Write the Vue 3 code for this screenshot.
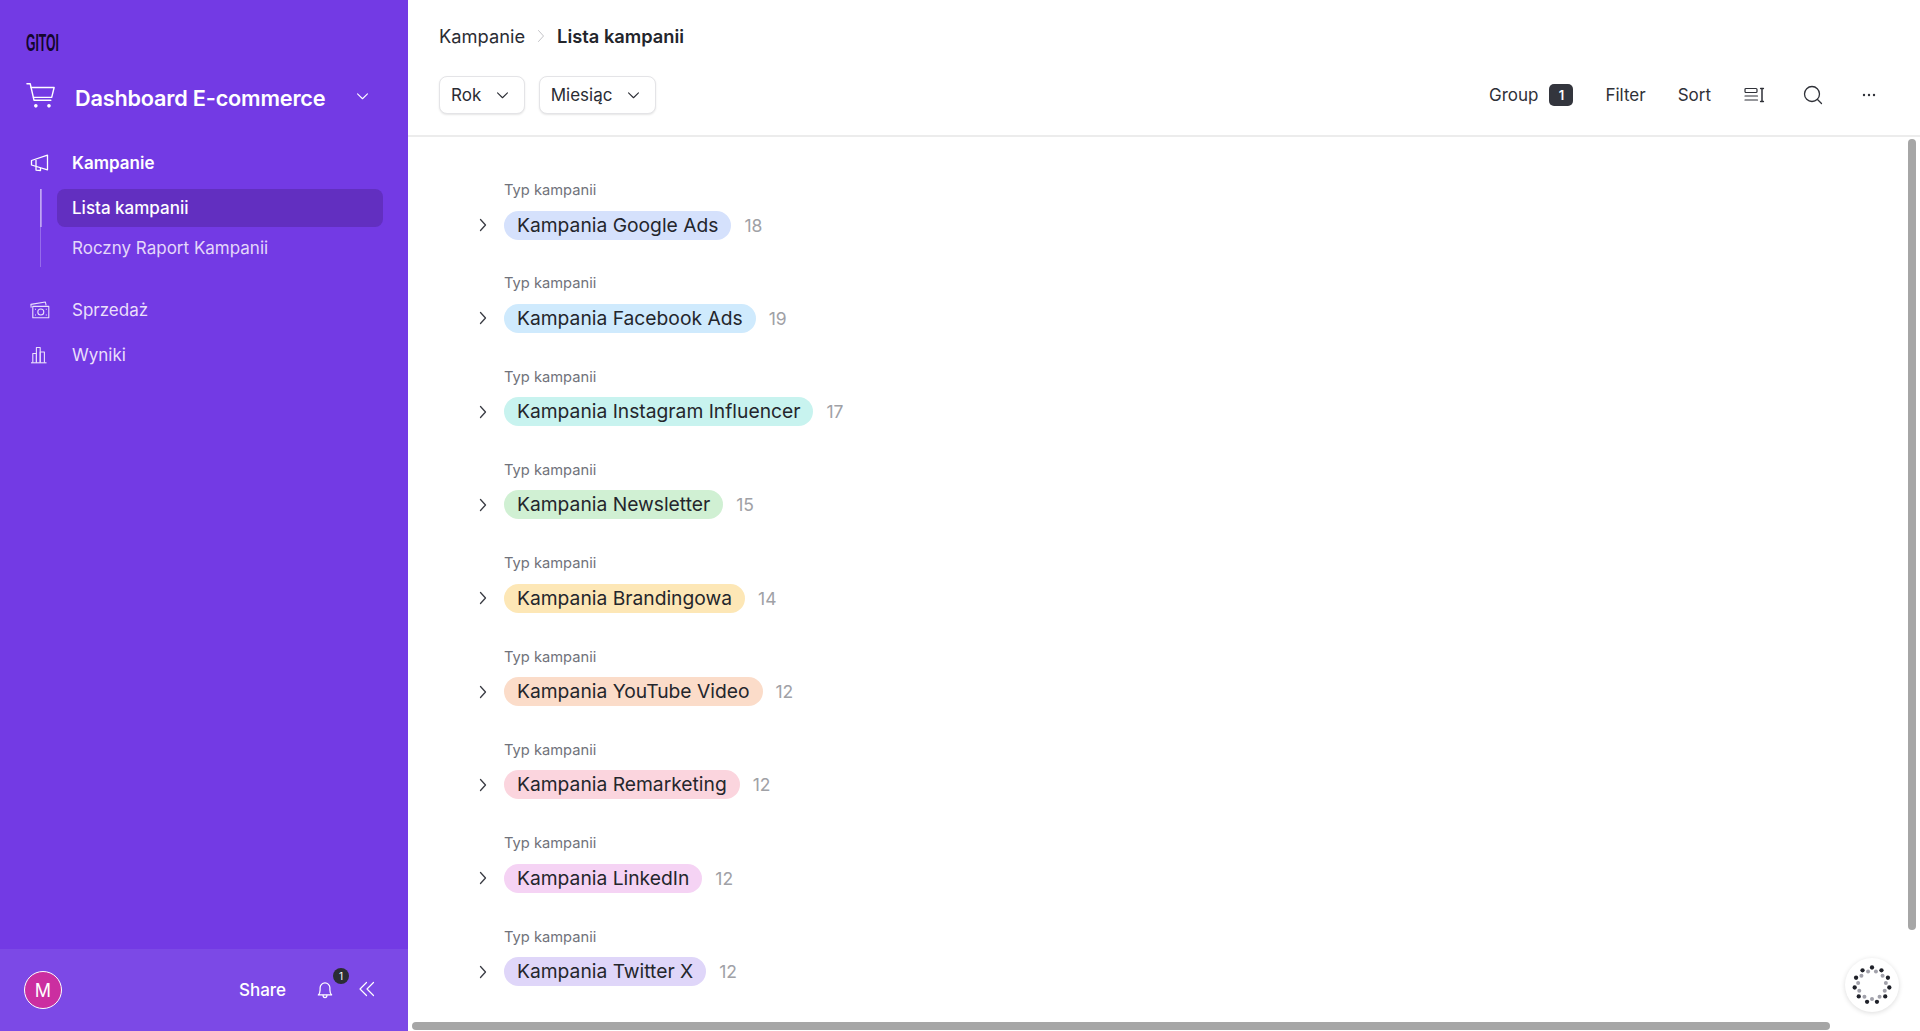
<script setup>
const campaigns = [
  { name: "Kampania Google Ads", count: 18, color: "#d5e1fc" },
  { name: "Kampania Facebook Ads", count: 19, color: "#cfeafd" },
  { name: "Kampania Instagram Influencer", count: 17, color: "#c8f3ef" },
  { name: "Kampania Newsletter", count: 15, color: "#d0f0d3" },
  { name: "Kampania Brandingowa", count: 14, color: "#fde7b6" },
  { name: "Kampania YouTube Video", count: 12, color: "#fbdcc9" },
  { name: "Kampania Remarketing", count: 12, color: "#fbd5de" },
  { name: "Kampania LinkedIn", count: 12, color: "#f5d3f4" },
  { name: "Kampania Twitter X", count: 12, color: "#dfd6f9" },
];

const ring = (count, radius, start) =>
  Array.from({ length: count }, (_, i) => {
    const angle = start + (i * 2 * Math.PI) / count;
    return { x: 30 + radius * Math.sin(angle), y: 30 - radius * Math.cos(angle) };
  });

const outerDots = ring(11, 17.5, 0);
const innerDots = ring(11, 14, Math.PI);
</script>

<template>
  <div class="page">
    <aside class="sidebar">
      <div class="side-top">
        <div class="logo"><span>GITOI</span></div>
        <div class="base-row">
          <svg class="cart" viewBox="0 0 32 28" fill="none" stroke="currentColor" stroke-width="1.5" stroke-linecap="round" stroke-linejoin="round">
            <path d="M1 1.5h3.5l4 17.5h18" />
            <path d="M5.4 5.5H30l-2.600 10.500H8" />
            <circle cx="10.500" cy="25" r="1.200" fill="currentColor" />
            <circle cx="24.500" cy="25" r="1.200" fill="currentColor" />
          </svg>
          <span class="base-name">Dashboard E-commerce</span>
          <svg class="base-chevron" viewBox="0 0 14 10" fill="none" stroke="currentColor" stroke-width="1.2" stroke-linecap="round" stroke-linejoin="round">
            <path d="M1.5 2l5.5 5.5L12.5 2" />
          </svg>
        </div>

        <nav class="nav">
          <div class="nav-item active">
            <svg class="nav-icon" viewBox="0 0 20 18" fill="none" stroke="currentColor" stroke-width="1.3" stroke-linejoin="round">
              <path d="M1.5 6.5L17.5 1.2v14.6L1.5 11z" />
              <path d="M6 12.5v3.6l4.5 .4v-2.6" />
              <path d="M6 6v6" />
            </svg>
            <span>Kampanie</span>
          </div>
          <div class="sub-list">
            <div class="sub-item current">Lista kampanii</div>
            <div class="sub-item">Roczny Raport Kampanii</div>
          </div>
          <div class="nav-item sales">
            <svg class="nav-icon" viewBox="0 0 20 18" fill="none" stroke="currentColor" stroke-width="1.1" stroke-linejoin="round">
              <path d="M1.2 6.6L.9 3.4 15.4 1l.7 3.4" />
              <rect x="2.8" y="5.4" width="16" height="11.4" />
              <circle cx="10.8" cy="11" r="3" />
              <path d="M5 8.2h1M15.8 14h1M5 14h1M15.8 8.2h1" />
            </svg>
            <span>Sprzedaż</span>
          </div>
          <div class="nav-item">
            <svg class="nav-icon" viewBox="0 0 20 18" fill="none" stroke="currentColor" stroke-width="1.1" stroke-linejoin="round">
              <path d="M1 16.8h15.5" />
              <path d="M2.8 16.8V7.5h3.6v9.3" />
              <path d="M6.4 16.8V1.5h3.8v15.3" />
              <path d="M10.2 16.8V6h4.2v10.8" />
            </svg>
            <span>Wyniki</span>
          </div>
        </nav>
      </div>

      <footer class="side-footer">
        <div class="avatar">M</div>
        <span class="share">Share</span>
        <div class="bell">
          <svg viewBox="0 0 18 22" fill="none" stroke="currentColor" stroke-width="1.4" stroke-linecap="round" stroke-linejoin="round">
            <path d="M1.5 16.5c1.6-1.4 2-3 2-5.500V8.500a5.500 5.500 0 0 1 11 0V11c0 2.500 .4 4.100 2 5.500z" />
            <path d="M6.800 17c0 3.400 4.400 3.400 4.400 0" />
          </svg>
          <span class="bell-badge">1</span>
        </div>
        <svg class="collapse" viewBox="0 0 16 16" fill="none" stroke="currentColor" stroke-width="1.2" stroke-linecap="round" stroke-linejoin="round">
          <path d="M7.500 1.500L1 8l6.500 6.500" />
          <path d="M14.500 1.500L8 8l6.500 6.500" />
        </svg>
      </footer>
    </aside>

    <main class="main">
      <header class="topbar">
        <div class="crumbs">
          <span class="crumb">Kampanie</span>
          <svg class="crumb-sep" viewBox="0 0 8 14" fill="none" stroke="currentColor" stroke-width="1" stroke-linecap="round" stroke-linejoin="round">
            <path d="M1.500 1.500L6.500 7l-5 5.500" />
          </svg>
          <span class="crumb strong">Lista kampanii</span>
        </div>
        <div class="toolbar">
          <div class="selects">
            <button class="select">
              Rok
              <svg viewBox="0 0 14 10" fill="none" stroke="currentColor" stroke-width="1.2" stroke-linecap="round" stroke-linejoin="round"><path d="M1.500 2l5.500 5.500L12.500 2" /></svg>
            </button>
            <button class="select">
              Miesiąc
              <svg viewBox="0 0 14 10" fill="none" stroke="currentColor" stroke-width="1.2" stroke-linecap="round" stroke-linejoin="round"><path d="M1.500 2l5.500 5.500L12.500 2" /></svg>
            </button>
          </div>
          <div class="actions">
            <span class="action group">Group <span class="count-badge">1</span></span>
            <span class="action filter">Filter</span>
            <span class="action sort">Sort</span>
            <svg class="tool height" viewBox="0 0 21 16" fill="none" stroke="currentColor" stroke-width="1.200" stroke-linecap="round" stroke-linejoin="round">
              <rect x="1" y="1.500" width="12" height="4" rx="1" />
              <path d="M1 9h12.500M1 13h12.500" />
              <path d="M18 1.500v12.500M16.600 1.500h2.800M16.600 14.500h2.800" stroke-width="1.500" />
            </svg>
            <svg class="tool search" viewBox="0 0 20 20" fill="none" stroke="currentColor" stroke-width="1.300" stroke-linecap="round">
              <circle cx="9" cy="9" r="7.500" />
              <path d="M14.500 14.500L18.500 18.500" />
            </svg>
            <svg class="tool more" viewBox="0 0 14 4" fill="currentColor">
              <circle cx="2" cy="2" r="1.200" />
              <circle cx="7" cy="2" r="1.200" />
              <circle cx="12" cy="2" r="1.200" />
            </svg>
          </div>
        </div>
      </header>

      <section class="groups">
        <div v-for="item in campaigns" :key="item.name" class="group-row">
          <div class="group-label">Typ kampanii</div>
          <div class="group-line">
            <svg class="expand" viewBox="0 0 8 14" fill="none" stroke="currentColor" stroke-width="1.300" stroke-linecap="round" stroke-linejoin="round">
              <path d="M1.500 1.500L6.500 7l-5 5.500" />
            </svg>
            <span class="pill" :style="{ background: item.color }">{{ item.name }}</span>
            <span class="count">{{ item.count }}</span>
          </div>
        </div>
      </section>

      <div class="scroll-v"></div>
      <div class="scroll-h"></div>
      <div class="spinner">
        <svg viewBox="0 0 60 60">
          <circle v-for="(d, i) in innerDots" :key="'i' + i" :cx="d.x" :cy="d.y" r="2" fill="#a1a1aa" />
          <circle v-for="(d, i) in outerDots" :key="'o' + i" :cx="d.x" :cy="d.y" r="2.150" fill="#1f2129" />
        </svg>
      </div>
    </main>
  </div>
</template>

<style scoped>
.page {
  display: flex;
  height: 1031px;
  overflow: hidden;
  font-family: Inter, "Liberation Sans", sans-serif;
  color: #2a2c33;
  background: #fff;
}

.sidebar {
  width: 408px;
  flex-shrink: 0;
  display: flex;
  flex-direction: column;
  justify-content: space-between;
  background: #733ae4;
  color: #fff;
}

.side-top {
  padding: 34px 0 0 26px;
}

.logo {
  height: 18px;
  line-height: 19px;
  width: 34px;
  color: #14062e;
  font-family: "Liberation Sans", sans-serif;
  font-weight: 700;
  font-size: 23px;
  white-space: nowrap;
}

.logo span {
  display: inline-block;
  transform: scaleX(0.53);
  transform-origin: left center;
}

.base-row {
  display: flex;
  align-items: center;
  margin-top: 32px;
  height: 28px;
}

.cart {
  width: 30px;
  height: 27px;
  margin: -6px 19px 0 0;
}

.base-name {
  font-size: 21.700px;
  font-weight: 600;
  letter-spacing: -0.2px;
  width: 281px;
}

.base-chevron {
  width: 13px;
  height: 9px;
  margin-top: -4px;
}

.nav {
  margin-top: 28px;
}

.nav-item {
  display: flex;
  align-items: center;
  height: 45px;
  font-size: 17px;
  color: #eadffb;
}

.nav-item.active {
  color: #fff;
  font-weight: 600;
  height: 46px;
}

.nav-item.sales {
  margin-top: 20px;
}

.nav-icon {
  width: 20px;
  height: 18px;
  margin: 0 22px 0 4px;
}

.sub-list {
  margin: 3px 0 0 14px;
  padding-left: 17px;
  width: 326px;
  box-shadow: inset 1px 0 0 rgba(255, 255, 255, 0.25);
  display: flex;
  flex-direction: column;
  gap: 2px;
}

.sub-item {
  height: 38px;
  line-height: 38px;
  padding-left: 15px;
  font-size: 17px;
  color: #e4d7fa;
  border-radius: 8px;
}

.sub-item.current {
  background: #622fc0;
  color: #fff;
  font-weight: 500;
  position: relative;
}

.sub-item.current::before {
  content: "";
  position: absolute;
  left: -17px;
  top: 0;
  bottom: 0;
  width: 1.500px;
  background: rgba(255, 255, 255, 0.4);
}

.side-footer {
  height: 82px;
  background: #7c49e6;
  display: flex;
  align-items: center;
  padding: 0 32px 0 24px;
}

.avatar {
  width: 38px;
  height: 38px;
  box-sizing: border-box;
  border: 1.500px solid #fff;
  border-radius: 50%;
  background: #cb2ea0;
  display: flex;
  align-items: center;
  justify-content: center;
  font-size: 18px;
}

.share {
  margin-left: 177px;
  font-size: 17px;
  font-weight: 500;
}

.bell {
  position: relative;
  width: 16px;
  height: 20px;
  margin-left: 31px;
}

.bell svg {
  display: block;
  width: 16px;
  height: 20px;
}

.bell-badge {
  position: absolute;
  top: -12px;
  left: 16px;
  width: 16px;
  height: 16px;
  border-radius: 50%;
  background: #2b2d35;
  font-size: 10px;
  line-height: 16px;
  text-align: center;
}

.collapse {
  width: 16px;
  height: 16px;
  margin: -2px 0 0 26px;
}

.main {
  position: relative;
  flex: 1;
  min-width: 0;
}

.topbar {
  height: 137px;
  box-sizing: border-box;
  padding: 22px 44px 0 31px;
  border-bottom: 2px solid #ececec;
}

.crumbs {
  display: flex;
  align-items: center;
  height: 28px;
  font-size: 18.300px;
}

.crumb.strong {
  font-weight: 600;
  color: #23252b;
}

.crumb-sep {
  width: 8px;
  height: 14px;
  margin: 0 12px 0 12px;
  color: #c4c4c8;
}

.toolbar {
  display: flex;
  justify-content: space-between;
  align-items: center;
  margin-top: 26px;
}

.selects {
  display: flex;
  gap: 14px;
}

.select {
  display: flex;
  align-items: center;
  gap: 15px;
  height: 38px;
  padding: 0 14.500px 0 11px;
  background: #fff;
  border: 1px solid #e4e4e7;
  border-radius: 8px;
  box-shadow: 0 1px 2px rgba(0, 0, 0, 0.1);
  font-family: inherit;
  font-size: 17px;
  color: #2a2c33;
}

.select svg {
  width: 13px;
  height: 9px;
}

.actions {
  display: flex;
  align-items: center;
  font-size: 17px;
  color: #2f3138;
}

.group {
  display: flex;
  align-items: center;
  gap: 11px;
}

.count-badge {
  width: 24px;
  height: 22px;
  border-radius: 5px;
  background: #33353d;
  color: #fff;
  font-size: 13px;
  font-weight: 600;
  line-height: 22px;
  text-align: center;
}

.filter {
  margin-left: 32px;
}

.sort {
  margin-left: 32px;
}

.tool {
  flex-shrink: 0;
}

.height {
  width: 21px;
  height: 16px;
  margin-left: 33px;
}

.search {
  width: 20px;
  height: 20px;
  margin-left: 38px;
}

.more {
  width: 14px;
  height: 4px;
  margin-left: 39px;
}

.groups {
  padding: 42px 0 0 71px;
}

.group-row {
  height: 93.330px;
}

.group-label {
  margin-left: 25px;
  height: 22px;
  line-height: 22px;
  font-size: 14.700px;
  color: #70727a;
}

.group-line {
  display: flex;
  align-items: center;
  margin-top: 9.500px;
}

.expand {
  width: 8px;
  height: 14px;
  margin-right: 17px;
  color: #3a3c44;
}

.pill {
  height: 29px;
  line-height: 29px;
  padding: 0 13px;
  border-radius: 15px;
  font-size: 19.250px;
  color: #24262c;
}

.count {
  margin-left: 13px;
  font-size: 17.500px;
  color: #a0a1a6;
}

.scroll-v {
  position: absolute;
  top: 139px;
  right: 4px;
  width: 8px;
  height: 791px;
  border-radius: 4px;
  background: #a6a6a6;
}

.scroll-h {
  position: absolute;
  left: 4px;
  bottom: 1px;
  width: 1418px;
  height: 8px;
  border-radius: 4px;
  background: #a6a6a6;
}

.spinner {
  position: absolute;
  left: 1437px;
  top: 958px;
  width: 54px;
  height: 54px;
  border-radius: 50%;
  background: #fff;
  box-shadow: 0 1px 5px rgba(0, 0, 0, 0.14);
}

.spinner svg {
  display: block;
  width: 60px;
  height: 60px;
  margin: -3px;
}
</style>

<style>
html,
body {
  margin: 0;
  overflow: hidden;
}
</style>
